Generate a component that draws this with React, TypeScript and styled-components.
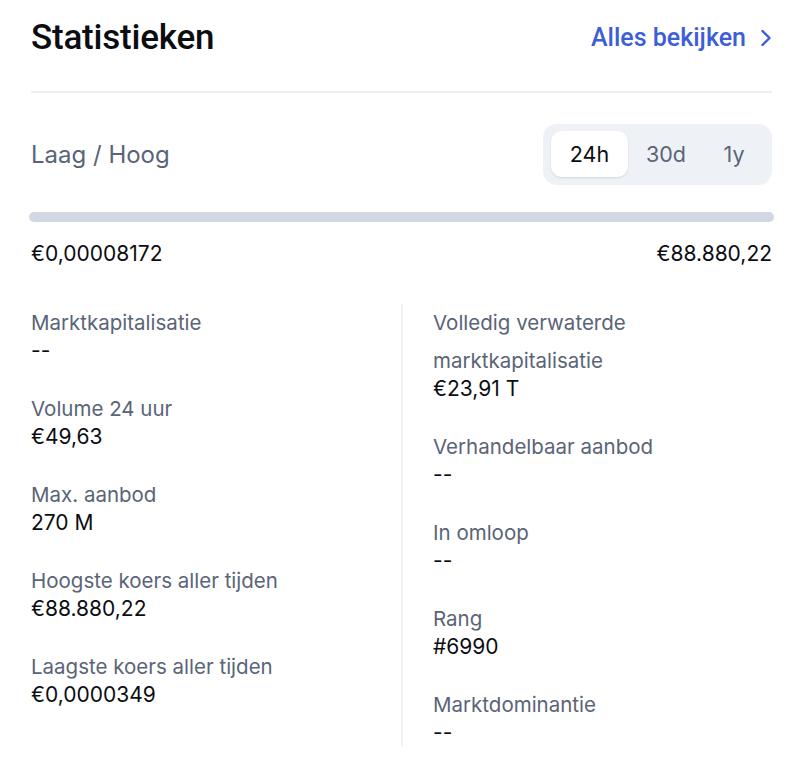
import React, { useState } from 'react';
import styled, { createGlobalStyle } from 'styled-components';

const GlobalStyle = createGlobalStyle`
  body {
    margin: 0;
    background: #ffffff;
    font-family: Inter, 'Liberation Sans', sans-serif;
    -webkit-font-smoothing: antialiased;
  }
`;

const Page = styled.main`
  width: 800px;
  box-sizing: border-box;
  padding: 0 28px 0 31px;
`;

const Header = styled.header`
  display: flex;
  align-items: center;
  justify-content: space-between;
  height: 75px;
  padding-bottom: 16px;
  border-bottom: 2px solid #eef0f3;
`;

const Title = styled.h1`
  margin: 0;
  font-family: Roboto, 'Liberation Sans', sans-serif;
  font-weight: 500;
  font-size: 35px;
  letter-spacing: -0.2px;
  color: #0b0d12;
`;

const SeeAll = styled.a`
  display: flex;
  align-items: center;
  gap: 14px;
  font-family: Roboto, 'Liberation Sans', sans-serif;
  font-weight: 500;
  font-size: 25px;
  color: #3d5ed6;
  text-decoration: none;
  cursor: pointer;
`;

const RangeRow = styled.div`
  display: flex;
  align-items: center;
  justify-content: space-between;
  margin-top: 31px;
`;

const RangeLabel = styled.span`
  font-size: 24px;
  color: #5a6477;
`;

const Segmented = styled.div`
  display: flex;
  padding: 7px 8px 8px 8px;
  background: #eef1f5;
  border-radius: 14px;
`;

const Segment = styled.button<{ $active?: boolean; $width: number }>`
  border: 0;
  padding: 0;
  font-family: Inter, 'Liberation Sans', sans-serif;
  font-size: 21.5px;
  height: 46px;
  width: ${(p) => p.$width}px;
  border-radius: 11px;
  color: ${(p) => (p.$active ? '#0b0d12' : '#5a6477')};
  background: ${(p) => (p.$active ? '#ffffff' : 'transparent')};
  box-shadow: ${(p) => (p.$active ? '0 1px 2px rgba(20, 30, 50, 0.12)' : 'none')};
  cursor: pointer;
`;

const Bar = styled.div`
  height: 10px;
  margin: 27px -2px 0 -2px;
  background: #d1d8e3;
  border-radius: 5px;
`;

const Extremes = styled.div`
  display: flex;
  justify-content: space-between;
  margin-top: 19px;
  font-size: 21px;
  color: #0b0d12;
`;

const Columns = styled.div`
  display: grid;
  grid-template-columns: 370px 1fr;
  margin-top: 38px;
`;

const Column = styled.div<{ $divider?: boolean }>`
  display: flex;
  flex-direction: column;
  gap: 30px;
  padding-left: ${(p) => (p.$divider ? '30px' : '0')};
  border-left: ${(p) => (p.$divider ? '2px solid #f1f3f6' : 'none')};
  padding-bottom: 4px;
`;

const Stat = styled.div`
  display: flex;
  flex-direction: column;
`;

const StatLabel = styled.span`
  font-size: 20.5px;
  line-height: 38px;
  color: #5a6477;
`;

const StatValue = styled.span`
  font-size: 21px;
  line-height: 18px;
  color: #0b0d12;
`;

const leftStats = [
  { label: 'Marktkapitalisatie', value: '--' },
  { label: 'Volume 24 uur', value: '€49,63' },
  { label: 'Max. aanbod', value: '270 M' },
  { label: 'Hoogste koers aller tijden', value: '€88.880,22' },
  { label: 'Laagste koers aller tijden', value: '€0,0000349' },
];

const rightStats = [
  { label: 'Volledig verwaterde marktkapitalisatie', value: '€23,91 T' },
  { label: 'Verhandelbaar aanbod', value: '--' },
  { label: 'In omloop', value: '--' },
  { label: 'Rang', value: '#6990' },
  { label: 'Marktdominantie', value: '--' },
];

const ranges = [
  { key: '24h', width: 77 },
  { key: '30d', width: 76 },
  { key: '1y', width: 60 },
];

function Chevron() {
  return (
    <svg width="12" height="18" viewBox="0 0 12 18" fill="none">
      <path d="M2.5 2 L9.5 9 L2.5 16" stroke="#3d5ed6" strokeWidth="2.4" strokeLinecap="round" strokeLinejoin="round" />
    </svg>
  );
}

export default function App() {
  const [range, setRange] = useState('24h');

  return (
    <>
      <GlobalStyle />
      <Page>
        <Header>
          <Title>Statistieken</Title>
          <SeeAll>
            Alles bekijken
            <Chevron />
          </SeeAll>
        </Header>

        <RangeRow>
          <RangeLabel>Laag / Hoog</RangeLabel>
          <Segmented>
            {ranges.map((r) => (
              <Segment key={r.key} $width={r.width} $active={r.key === range} onClick={() => setRange(r.key)}>
                {r.key}
              </Segment>
            ))}
          </Segmented>
        </RangeRow>

        <Bar />
        <Extremes>
          <span>€0,00008172</span>
          <span>€88.880,22</span>
        </Extremes>

        <Columns>
          <Column>
            {leftStats.map((s) => (
              <Stat key={s.label}>
                <StatLabel>{s.label}</StatLabel>
                <StatValue>{s.value}</StatValue>
              </Stat>
            ))}
          </Column>
          <Column $divider>
            {rightStats.map((s) => (
              <Stat key={s.label}>
                <StatLabel>{s.label}</StatLabel>
                <StatValue>{s.value}</StatValue>
              </Stat>
            ))}
          </Column>
        </Columns>
      </Page>
    </>
  );
}
